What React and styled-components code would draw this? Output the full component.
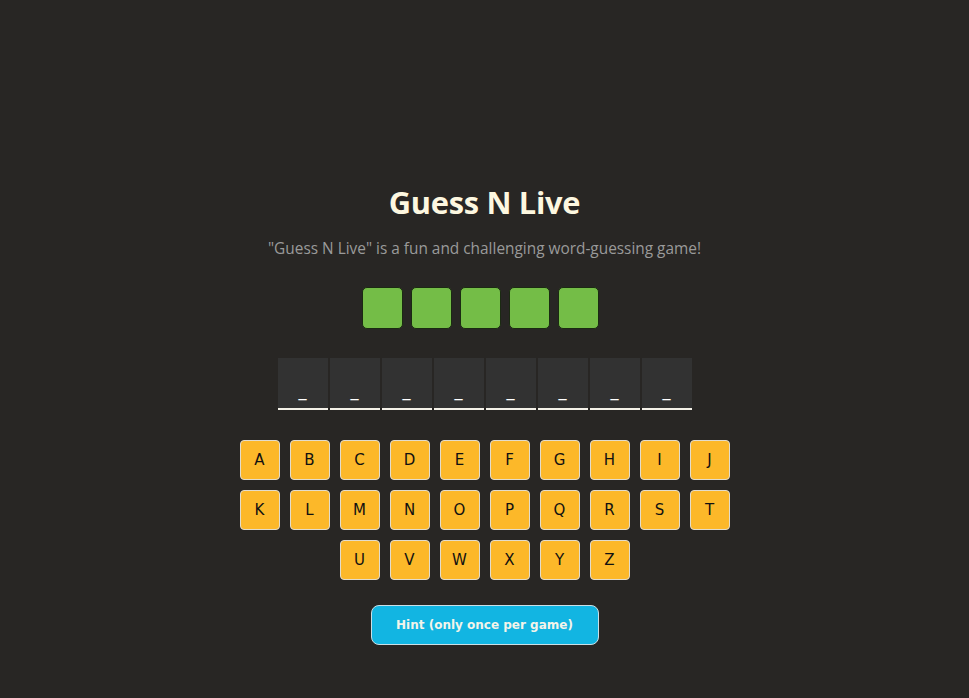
import React from "react";
import styled, { createGlobalStyle } from "styled-components";

const Global = createGlobalStyle`
  html, body { margin: 0; padding: 0; background: #282624; }
  body { font-family: "Open Sans", "Noto Sans", sans-serif; min-height: 698px; }
`;

const Page = styled.main`
  display: flex;
  flex-direction: column;
  align-items: center;
  padding-top: 184px;
`;

const Title = styled.h1`
  margin: 0;
  font-size: 30.8px;
  line-height: 36px;
  font-weight: 700;
  color: #fdf7e0;
  letter-spacing: -0.3px;
`;

const Subtitle = styled.p`
  margin: 19px 0 0;
  font-size: 15.4px;
  line-height: 20px;
  color: #9a9a9a;
`;

const Boxes = styled.div`
  display: flex;
  gap: 8px;
  margin-top: 28px;
  margin-right: 8px;
`;

const Box = styled.div`
  box-sizing: border-box;
  width: 41px;
  height: 42px;
  background: #74bd47;
  border: 1px solid #1b2a12;
  border-radius: 5px;
`;

const Slots = styled.div`
  display: flex;
  gap: 2px;
  margin-top: 29px;
`;

const Slot = styled.div`
  box-sizing: border-box;
  width: 50px;
  height: 52px;
  background: #323232;
  border-bottom: 2px solid #f4f1e8;
  display: flex;
  align-items: flex-end;
  justify-content: center;
  padding-bottom: 9px;
  color: #ffffff;
  font-family: "DejaVu Sans", sans-serif;
  font-size: 16px;
  line-height: 16px;
`;

const Keyboard = styled.div`
  display: flex;
  flex-direction: column;
  align-items: center;
  gap: 10px;
  margin-top: 30px;
`;

const KeyRow = styled.div`
  display: flex;
  gap: 10px;
`;

const Key = styled.button`
  box-sizing: border-box;
  width: 40px;
  height: 40px;
  padding: 0;
  background: #fcb829;
  border: 1px solid #e2dccd;
  border-radius: 4px;
  color: #111;
  font-family: "DejaVu Sans", "Noto Sans", sans-serif;
  font-size: 15px;
  cursor: pointer;
`;

const Hint = styled.button`
  box-sizing: border-box;
  margin-top: 25px;
  width: 228px;
  height: 40px;
  background: #12b5e2;
  border: 1px solid #c9dfe6;
  border-radius: 8px;
  color: #f4f4ea;
  font-family: "DejaVu Sans", sans-serif;
  font-weight: 700;
  font-size: 12px;
  cursor: pointer;
`;

const rows = ["ABCDEFGHIJ", "KLMNOPQRST", "UVWXYZ"];

export default function App() {
  return (
    <>
      <Global />
      <Page>
        <Title>Guess N Live</Title>
        <Subtitle>"Guess N Live" is a fun and challenging word-guessing game!</Subtitle>
        <Boxes>
          {[0, 1, 2, 3, 4].map((i) => (
            <Box key={i} />
          ))}
        </Boxes>
        <Slots>
          {[0, 1, 2, 3, 4, 5, 6, 7].map((i) => (
            <Slot key={i}>_</Slot>
          ))}
        </Slots>
        <Keyboard>
          {rows.map((r) => (
            <KeyRow key={r}>
              {r.split("").map((c) => (
                <Key key={c}>{c}</Key>
              ))}
            </KeyRow>
          ))}
        </Keyboard>
        <Hint>Hint (only once per game)</Hint>
      </Page>
    </>
  );
}
